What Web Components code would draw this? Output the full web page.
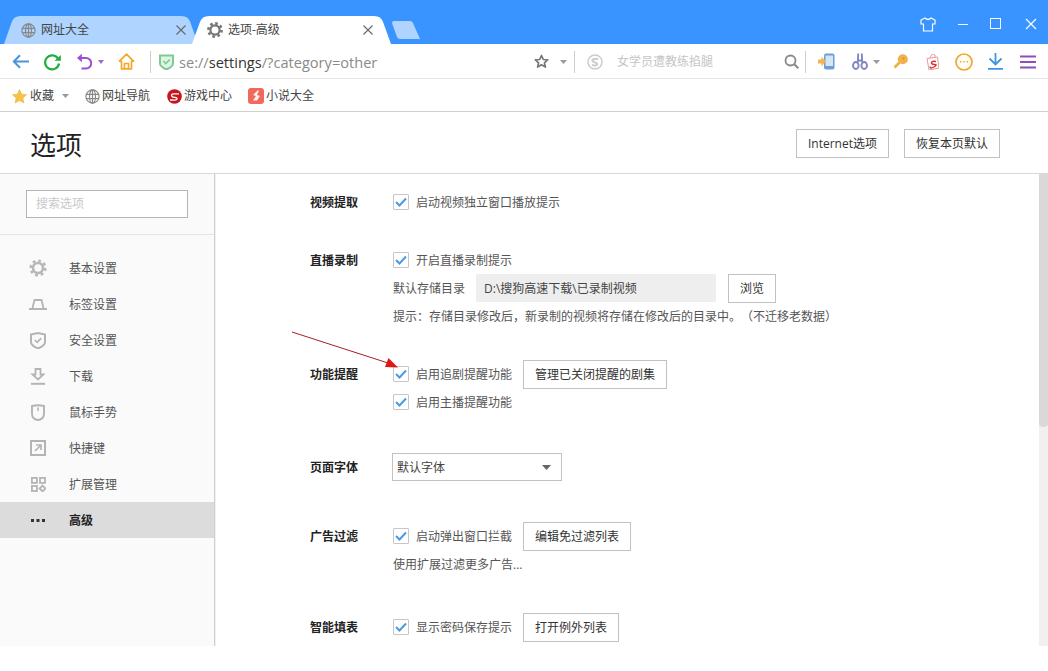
<!DOCTYPE html>
<html lang="zh-CN"><head><meta charset="utf-8"><title>选项</title>
<style>html,body{margin:0;background:#fff}body{font:12px/16px "Open Sans","Noto Sans CJK SC",sans-serif;color:#444;text-spacing-trim:space-all}</style>
</head><body>
<x-app></x-app>
<script>
const ICONS={
globe:[15,15,'<g fill="none" stroke="#888" stroke-width="1.2"><circle cx="7.5" cy="7.5" r="6.6"/><ellipse cx="7.5" cy="7.5" rx="3" ry="6.6"/><path d="M1 5.3h13M1 9.7h13M7.5 1v13"/></g>'],
gear:[16,16,'<g fill="none" stroke="#777"><circle cx="8" cy="8" r="4.6" stroke-width="2.2"/><circle cx="8" cy="8" r="6.6" stroke-width="2.6" stroke-dasharray="2.6 2.58"/></g>'],
x:[10,10,'<path d="M.5.5l9 9M9.5.5l-9 9" stroke="#666" stroke-width="1.1" fill="none"/>'],
newtab:[28,18,'<path d="M2 0h16q2 0 3 2l7 16H8q-2 0-3-2L0 2q0-2 2-2z" fill="#aed4ff"/>'],
shirt:[16,15,'<path d="M5 1L1 3v4l2.500 0v7h9V7H15V3l-4-2q-3 3-6 0z" fill="none" stroke="#fff" stroke-width="1.200"/>'],
min:[12,12,'<path d="M1 6.500h10" stroke="#fff" stroke-width="1"/>'],
max:[12,12,'<rect x=".5" y=".5" width="10" height="10" fill="none" stroke="#fff"/>'],
close:[12,12,'<path d="M1 1l10 10M11 1L1 11" stroke="#fff" stroke-width="1.100"/>'],
back:[17,15,'<path d="M17 7.500H2M8 1.300L1.800 7.500 8 13.700" fill="none" stroke="#4c94dc" stroke-width="2"/>'],
refresh:[18,18,'<path d="M15.500 6.500A7 7 0 1 0 16 10.500" fill="none" stroke="#1fae3c" stroke-width="2.200"/><path d="M11.500 7.800h6.300V2z" fill="#1fae3c"/>'],
undo:[16,17,'<path d="M2 5h8a5 5 0 0 1 0 10.500H5.500" fill="none" stroke="#9b4fd4" stroke-width="2"/><path d="M5.800 .8L1 5l4.800 4.200z" fill="#9b4fd4"/>'],
caret:[7,4,'<path d="M0 0h7L3.500 4z" fill="#999"/>'],
caretp:[6,4,'<path d="M0 0h6L3 4z" fill="#9b6fc4"/>'],
home:[17,17,'<path d="M8.500 1.200L1.500 8.200h2V15.800h10V8.200h2zM6.500 15.500V10.500h4v5" fill="none" stroke="#f5a72c" stroke-width="1.700" stroke-linejoin="round"/>'],
shield:[15,16,'<path d="M1 1.500h13v8q0 3-6.500 6Q1 12.500 1 9.500z" fill="#e0f4e6" stroke="#7fca92" stroke-width="2"/><path d="M4.300 7l2.500 2.500 4-4" fill="none" stroke="#7fca92" stroke-width="1.700"/>'],
star:[15,15,'<path d="M7.500 1.500l1.800 4 4.400.4-3.300 2.900 1 4.300-3.900-2.300-3.900 2.300 1-4.300L1.300 5.900l4.400-.4z" fill="none" stroke="#777" stroke-width="1.700" stroke-linejoin="round"/>'],
sogou:[16,16,'<circle cx="8" cy="8" r="7" fill="none" stroke="#ccc" stroke-width="1.500"/><path d="M11 5.500Q8 4 6 5.300T7 8l2 .8q2 1 .5 2.300T5 10.500" fill="none" stroke="#ccc" stroke-width="2"/>'],
search:[15,15,'<circle cx="6.500" cy="6.500" r="5" fill="none" stroke="#888" stroke-width="1.800"/><path d="M10.300 10.300L14.300 14.300" stroke="#888" stroke-width="2"/>'],
phone:[17,17,'<rect x="6" y="0.500" width="10.500" height="16" rx="2" fill="#6d9ed6"/><rect x="7.500" y="2.500" width="7.500" height="10.500" fill="#d5e5f6"/><path d="M0 6.500h3.500V3.800L8 8.500l-4.500 4.700V10.500H0z" fill="#f2b454"/>'],
scissors:[16,17,'<g fill="none" stroke="#7f88c0" stroke-width="1.900"><ellipse cx="3.800" cy="12.500" rx="2.800" ry="3.500"/><ellipse cx="12.200" cy="12.500" rx="2.800" ry="3.500"/><path d="M5.800 9.500L6.200 .5M10.200 9.500L9.800 .5M5.800 7.500h4.400"/></g>'],
key:[15,15,'<circle cx="9.800" cy="5.200" r="5" fill="#f0b04a"/><circle cx="10.500" cy="4.500" r="1" fill="#d98f22"/><path d="M6.500 8.500L1.500 13.500" stroke="#f0b04a" stroke-width="2.800"/>'],
bag:[13,16,'<path d="M1 4.500l10.500-1.500 1.500 11-10 2z" fill="#fff" stroke="#e79a9a"/><path d="M4 4q1-4 3.500-3.800T9 3" fill="none" stroke="#e79a9a"/><path d="M10 7.500Q6 6.700 5.500 8.500T8.500 10.500 8 13 4 12.500" fill="none" stroke="#e42a2a" stroke-width="1.400"/>'],
more:[18,18,'<circle cx="9" cy="9" r="8" fill="#fffdf6" stroke="#f0a830" stroke-width="1.700"/><path d="M5 8h1.400v1.400H5zM8.300 8h1.400v1.400H8.300zM11.600 8H13v1.400h-1.400z" fill="#f0a830"/>'],
download:[15,17,'<path d="M7.500 0v11M1.500 5.500l6 6 6-6M0 15.800h15" fill="none" stroke="#3f96e0" stroke-width="1.800"/>'],
menu:[16,14,'<path d="M0 1.500h16M0 7h16M0 12.500h16" stroke="#8f4db5" stroke-width="2.200"/>'],
bstar:[15,15,'<path d="M7.500.6l2.100 4.600 5 .5-3.700 3.400 1 4.900-4.400-2.500-4.400 2.500 1-4.900L.4 5.700l5-.5z" fill="#f6c445" stroke="#e6ab2e" stroke-width=".5"/>'],
game:[15,15,'<circle cx="7.500" cy="7.500" r="7.300" fill="#c8141c"/><path d="M12 4.800H6.500Q4 5 4.600 6.800T8 8.300Q10.500 8.600 10 10T5 11H3" fill="none" stroke="#fff" stroke-width="1.300"/>'],
novel:[16,16,'<rect width="16" height="16" rx="3" fill="#f0695a"/><path d="M9.500 2.500L5 7l3 1-3 4.500h4L12 8 9 7l2-4.500z" fill="#fff" opacity=".9"/>'],
ngear:[18,18,'<g fill="none" stroke="#b8b8b8"><circle cx="9" cy="9" r="5" stroke-width="2.600"/><circle cx="9" cy="9" r="7.200" stroke-width="2.800" stroke-dasharray="2.800 2.850"/></g>'],
ntab:[18,11,'<path d="M3.500 9L5.500 1h7l2 8" fill="none" stroke="#b4b4b4" stroke-width="1.800"/><path d="M0 10h18" stroke="#b4b4b4" stroke-width="2"/>'],
nshield:[16,17,'<path d="M1 2.500L8 1l7 1.500v7.500q0 3.500-7 6.500-7-3-7-6.500z" fill="none" stroke="#b4b4b4" stroke-width="2"/><path d="M4.800 8l2.400 2.400 4-4.200" fill="none" stroke="#b4b4b4" stroke-width="1.700"/>'],
ndown:[16,17,'<path d="M5.500 1h5v5.500h3L8 11.500 2.500 6.500h3z" fill="none" stroke="#b4b4b4" stroke-width="1.800"/><path d="M1 15.800h14" stroke="#b4b4b4" stroke-width="2"/>'],
nmouse:[14,17,'<path d="M1 2Q7 .4 13 2V10A6 6 0 0 1 1 10z" fill="none" stroke="#b4b4b4" stroke-width="1.900"/><path d="M7 3.500v3.500" stroke="#b4b4b4" stroke-width="1.600"/>'],
nkey:[16,16,'<rect x="1" y="1" width="14" height="14" fill="none" stroke="#b4b4b4" stroke-width="2"/><path d="M5 11l6-6M6 5h5v5" fill="none" stroke="#b4b4b4" stroke-width="1.700"/>'],
next:[15,15,'<g fill="none" stroke="#b4b4b4" stroke-width="1.800"><rect x=".9" y=".9" width="5" height="5"/><rect x="9" y=".9" width="5" height="5"/><rect x=".9" y="9" width="5" height="5"/><path d="M11.500 8.600l2.900 2.900-2.900 2.900-2.900-2.900z"/></g>'],
ndots:[14,4,'<path d="M0 1h3v3H0zM5.500 1h3v3h-3zM11 1h3v3h-3z" fill="#333"/>'],
check:[12,10,'<path d="M1 5l3.500 3.500L11 1.500" fill="none" stroke="#4a9be6" stroke-width="2"/>'],
selcaret:[9,5,'<path d="M0 0h9L4.500 5z" fill="#666"/>']
};
function def(name,html,init){
  const t=document.createElement('template');t.innerHTML=html;
  customElements.define(name,class extends HTMLElement{
    connectedCallback(){ if(this.shadowRoot)return;
      const r=this.attachShadow({mode:'open'});r.appendChild(t.content.cloneNode(true));
      if(init)init(this,r);
    }});
}
def('x-icon','<style>:host{display:inline-flex;flex:none;line-height:0}svg{display:block}</style><span id="s"></span>',(h,r)=>{
  const [w,ht,b]=ICONS[h.getAttribute('n')];
  r.getElementById('s').innerHTML=`<svg width="${w}" height="${ht}" viewBox="0 0 ${w} ${ht}">${b}</svg>`;
});
def('x-tab',`<style>
:host{display:flex;align-items:center;position:relative;height:28px;box-sizing:border-box;font-size:12px;color:#444;flex:none}
svg{position:absolute;inset:0;width:100%;height:100%;z-index:0}
.c{position:relative;display:flex;align-items:center;width:100%;gap:5px}
.sp{flex:1}
</style><svg viewBox="0 0 200 28" preserveAspectRatio="none"><path id="p" d="M0 28L8 6Q10 0 17 0H183Q190 0 192 6L200 28z"/></svg>
<div class="c"><slot name="i"></slot><slot></slot><span class="sp"></span><x-icon n="x"></x-icon></div>`,(h,r)=>{
  r.getElementById('p').setAttribute('fill',h.getAttribute('fill'));
});
def('x-titlebar',`<style>
:host{display:flex;height:44px;background:#3994ff;box-sizing:border-box;padding:16px 0 0 4px;position:relative}
.tabs{display:flex;flex:1;align-items:flex-start}
.win{display:flex;align-items:center;height:16px;margin-top:0;position:absolute;right:11px;top:16px}
</style><div class="tabs"><slot></slot></div><div class="win"><slot name="win"></slot></div>`);
def('x-toolbar',`<style>:host{display:flex;align-items:center;height:35px;box-sizing:border-box;border-bottom:1px solid #e6e6e6;background:#fff;padding-top:1px}</style><slot></slot>`);
def('x-bookmarks',`<style>:host{display:flex;align-items:center;height:33px;box-sizing:border-box;border-bottom:1px solid #cfcfcf;background:#fff;color:#444;padding-top:2px}</style><slot></slot>`);
def('x-sep',`<style>:host{display:block;width:1px;height:22px;background:#cfcfcf;flex:none}</style>`);
def('x-btn',`<style>:host{display:inline-flex;align-items:center;justify-content:center;height:29px;margin-bottom:-1px;box-sizing:border-box;border:1px solid #c2c2c2;padding:0 11px;color:#333;background:#fff;white-space:nowrap;flex:none}</style><slot></slot>`);
def('x-check',`<style>:host{display:flex;align-items:center;flex:none;color:#555;white-space:nowrap}
.b{width:14px;height:14px;border:1px solid #c6c6c6;border-radius:1px;margin:0 7px 0 1px;display:flex;align-items:center;justify-content:center;background:#fff}
.t{padding-top:2px}</style>
<span class="b"><x-icon n="check"></x-icon></span><span class="t"><slot></slot></span>`);
def('x-header',`<style>:host{display:flex;align-items:center;height:62px;box-sizing:border-box;border-bottom:1px solid #d8d8d8;padding:1px 48px 0 30px;background:#fff}
.t{font-size:26px;line-height:34px;color:#222;flex:1;padding-top:4px}.g{display:flex;gap:15px}</style><div class="t"><slot name="title"></slot></div><div class="g"><slot></slot></div>`);
def('x-nav-item',`<style>:host{display:flex;align-items:center;height:36px;padding-left:29px;color:#555}
:host([active]){background:#dcdcdc;color:#222;font-weight:700}
.i{width:18px;display:flex;justify-content:center;margin-right:22px}
.t{padding-top:2px}</style><span class="i"><slot name="i"></slot></span><span class="t"><slot></slot></span>`);
def('x-sidebar',`<style>:host{display:block;width:214px;box-sizing:content-box;background:#fafafa;border-right:1px solid #d0d0d0;box-shadow:1px 0 0 #f0f0f0;flex:none}
.s{height:61px;box-sizing:border-box;border-bottom:1px solid #e4e4e4;padding:16px 26px 0}
.in{height:28px;width:162px;box-sizing:border-box;border:1px solid #b4b4b4;background:#fff;color:#c8c8c8;padding-left:9px;line-height:25px}
nav{padding-top:15px}</style><div class="s"><div class="in">搜索选项</div></div><nav><slot></slot></nav>`);
def('x-section',`<style>:host{display:grid;grid-template-columns:82px 1fr}
.l{font-weight:700;color:#222;height:28px;line-height:30px}
.r{display:flex;flex-direction:column}</style><div class="l"><slot name="label"></slot></div><div class="r"><slot></slot></div>`);
def('x-row',`<style>:host{display:flex;align-items:center;height:28px;color:#555;white-space:nowrap}</style><slot></slot>`);
def('x-scrollbar',`<style>:host{display:flex;flex-direction:column;width:9px;background:#f0f0f0;flex:none}
.t{height:253px;background:#d9d9d9;border-radius:0 0 4px 4px}</style><div class="t"></div>`);
def('x-main',`<style>:host{display:flex;flex:1;min-height:0;overflow:hidden;position:relative;background:#fff}
.c{flex:1;padding:14px 0 0 95px;overflow:hidden;min-width:0}
svg{position:absolute;left:0;top:0;pointer-events:none}</style>
<slot name="side"></slot><div class="c"><slot></slot></div><slot name="bar"></slot>
<svg width="420" height="210" viewBox="0 174 420 210"><path d="M292 332L388 363" stroke="#a81e1e" stroke-width="1" fill="none"/><path d="M398 367.500L385 367 388.500 358z" fill="#e01616"/></svg>`);
def('x-app',`<style>:host{display:flex;flex-direction:column;height:646px;overflow:hidden;font:12px/16px "Open Sans","Noto Sans CJK SC",sans-serif}
x-section{margin-top:var(--t)}
.url{font-size:14.600px;color:#8a8a8a;margin-left:5px;white-space:nowrap}.url b{font-weight:400;color:#333}
.ph{color:#c4c4c4;margin-left:14px;white-space:nowrap}
.sel{display:flex;align-items:center;justify-content:space-between;width:170px;height:28px;box-sizing:border-box;border:1px solid #c2c2c2;padding:0 10px 0 4px;color:#444}
.sel span,.path span,.tx,.tx2{padding-top:2px}
.path{display:flex;align-items:center;width:240px;height:28px;box-sizing:border-box;background:#eee;padding-left:8px;margin:0 12px 0 11px;color:#444}
.tx{margin-left:1px}.tx2{margin-left:1px}
</style>
<x-titlebar>
  <x-tab fill="#aed4ff" style="width:194px;padding:0 12px 0 17px"><x-icon slot="i" n="globe"></x-icon>网址大全</x-tab>
  <x-tab fill="#ffffff" style="width:199px;margin-left:-6px;padding:0 18px 0 15px"><x-icon slot="i" n="gear"></x-icon>选项-高级</x-tab>
  <x-icon n="newtab" style="margin:5px 0 0 1px"></x-icon>
  <x-icon slot="win" n="shirt"></x-icon>
  <x-icon slot="win" n="min" style="margin-left:21px"></x-icon>
  <x-icon slot="win" n="max" style="margin-left:21px"></x-icon>
  <x-icon slot="win" n="close" style="margin-left:23px"></x-icon>
</x-titlebar>
<x-toolbar>
  <x-icon n="back" style="margin-left:12px"></x-icon>
  <x-icon n="refresh" style="margin-left:14px"></x-icon>
  <x-icon n="undo" style="margin-left:15px"></x-icon>
  <x-icon n="caretp" style="margin-left:6px"></x-icon>
  <x-icon n="home" style="margin-left:14px"></x-icon>
  <x-sep style="margin-left:15px"></x-sep>
  <x-icon n="shield" style="margin-left:8px"></x-icon>
  <span class="url">se://<b>settings</b>/?category=other</span>
  <span style="flex:1"></span>
  <x-icon n="star"></x-icon>
  <x-icon n="caret" style="margin-left:11px"></x-icon>
  <x-sep style="margin-left:7px"></x-sep>
  <x-icon n="sogou" style="margin-left:12px"></x-icon>
  <span class="ph">女学员遭教练掐腿</span>
  <x-icon n="search" style="margin-left:71px"></x-icon>
  <x-sep style="margin-left:6px"></x-sep>
  <x-icon n="phone" style="margin-left:12px"></x-icon>
  <x-icon n="scissors" style="margin-left:17px"></x-icon>
  <x-icon n="caret" style="margin-left:5px"></x-icon>
  <x-icon n="key" style="margin-left:13px"></x-icon>
  <x-icon n="bag" style="margin-left:18px"></x-icon>
  <x-icon n="more" style="margin-left:16px"></x-icon>
  <x-icon n="download" style="margin-left:15px"></x-icon>
  <x-icon n="menu" style="margin:0 12px 0 17px"></x-icon>
</x-toolbar>
<x-bookmarks>
  <x-icon n="bstar" style="margin-left:12px"></x-icon><span style="margin-left:3px">收藏</span>
  <x-icon n="caret" style="margin-left:8px"></x-icon>
  <x-icon n="globe" style="margin-left:16px"></x-icon><span style="margin-left:2px">网址导航</span>
  <x-icon n="game" style="margin-left:17px"></x-icon><span style="margin-left:2px">游戏中心</span>
  <x-icon n="novel" style="margin-left:16px"></x-icon><span style="margin-left:2px">小说大全</span>
</x-bookmarks>
<x-header><span slot="title">选项</span><x-btn style="width:93px;padding:0">Internet选项</x-btn><x-btn style="width:96px;padding:0">恢复本页默认</x-btn></x-header>
<x-main>
  <x-sidebar slot="side">
    <x-nav-item><x-icon slot="i" n="ngear"></x-icon>基本设置</x-nav-item>
    <x-nav-item><x-icon slot="i" n="ntab"></x-icon>标签设置</x-nav-item>
    <x-nav-item><x-icon slot="i" n="nshield"></x-icon>安全设置</x-nav-item>
    <x-nav-item><x-icon slot="i" n="ndown"></x-icon>下载</x-nav-item>
    <x-nav-item><x-icon slot="i" n="nmouse"></x-icon>鼠标手势</x-nav-item>
    <x-nav-item><x-icon slot="i" n="nkey"></x-icon>快捷键</x-nav-item>
    <x-nav-item><x-icon slot="i" n="next"></x-icon>扩展管理</x-nav-item>
    <x-nav-item active><x-icon slot="i" n="ndots"></x-icon>高级</x-nav-item>
  </x-sidebar>
  <x-section style="--t:0px"><span slot="label">视频提取</span><x-row><x-check>启动视频独立窗口播放提示</x-check></x-row></x-section>
  <x-section style="--t:30px"><span slot="label">直播录制</span>
    <x-row><x-check>开启直播录制提示</x-check></x-row>
    <x-row><span class="tx">默认存储目录</span><div class="path"><span>D:\\搜狗高速下载\\已录制视频</span></div><x-btn>浏览</x-btn></x-row>
    <x-row><span class="tx">提示：存储目录修改后，新录制的视频将存储在修改后的目录中。（不迁移老数据）</span></x-row>
  </x-section>
  <x-section style="--t:30px"><span slot="label">功能提醒</span>
    <x-row><x-check>启用追剧提醒功能</x-check><x-btn style="margin-left:11px">管理已关闭提醒的剧集</x-btn></x-row>
    <x-row><x-check>启用主播提醒功能</x-check></x-row>
  </x-section>
  <x-section style="--t:37px"><span slot="label">页面字体</span>
    <x-row><div class="sel"><span>默认字体</span><x-icon n="selcaret"></x-icon></div></x-row>
  </x-section>
  <x-section style="--t:41px"><span slot="label">广告过滤</span>
    <x-row><x-check>启动弹出窗口拦截</x-check><x-btn style="margin-left:11px">编辑免过滤列表</x-btn></x-row>
    <x-row><span class="tx2">使用扩展过滤更多广告...</span></x-row>
  </x-section>
  <x-section style="--t:35px"><span slot="label">智能填表</span>
    <x-row><x-check>显示密码保存提示</x-check><x-btn style="margin-left:11px">打开例外列表</x-btn></x-row>
    <x-row><x-check>自动填写已保存表单</x-check></x-row>
  </x-section>
  <x-scrollbar slot="bar"></x-scrollbar>
</x-main>`,(h,r)=>{});
</script>
</body></html>
